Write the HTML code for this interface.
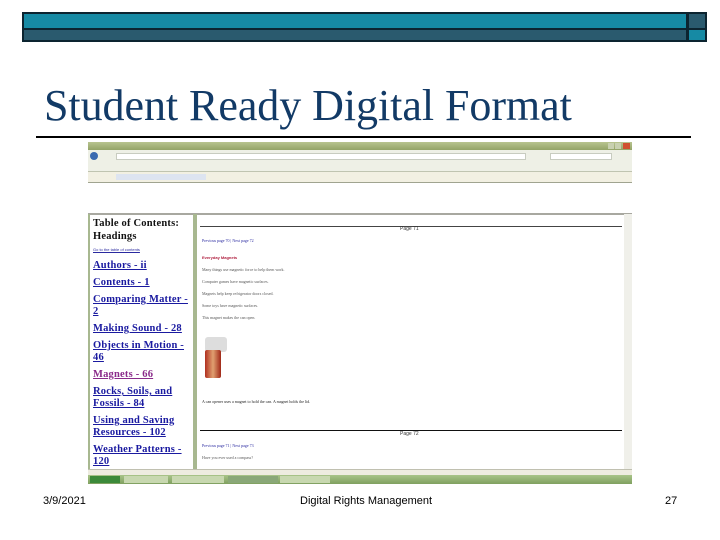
<!DOCTYPE html>
<html><head><style>
*{margin:0;padding:0;box-sizing:border-box}
body{width:720px;height:540px;background:#fff;position:relative;overflow:hidden;font-family:"Liberation Sans",sans-serif}
.a{position:absolute}
.toc a{display:block;color:#1a1aa0;font-family:"Liberation Serif",serif;font-weight:bold;font-size:10.5px;line-height:12px;text-decoration:underline;margin-bottom:5px;letter-spacing:0.2px}
.t{font-size:4px;color:#555;font-family:"Liberation Serif",serif;position:absolute;left:202px}
</style></head><body>
<div class="a" style="left:22px;top:12px;width:685px;height:30px;background:#0c2430"></div>
<div class="a" style="left:24px;top:14px;width:662px;height:14px;background:#168aa4"></div>
<div class="a" style="left:24px;top:30px;width:662px;height:10px;background:#2a5a6e"></div>
<div class="a" style="left:689px;top:14px;width:16px;height:14px;background:#2a5a6e"></div>
<div class="a" style="left:689px;top:30px;width:16px;height:10px;background:#168aa4"></div>
<div class="a" style="left:44px;top:80px;font-family:'Liberation Serif',serif;font-size:44px;color:#123a66;white-space:nowrap;letter-spacing:-0.05px">Student Ready Digital Format</div>
<div class="a" style="left:36px;top:136px;width:655px;height:2px;background:#000"></div>

<div class="a" style="left:88px;top:142px;width:544px;height:342px;background:#fff;overflow:hidden">
 <div class="a" style="left:0;top:0;width:544px;height:8px;background:linear-gradient(#b8c490,#94a468)"></div>
 <div class="a" style="left:520px;top:1px;width:6px;height:6px;background:#c8d0b0"></div>
 <div class="a" style="left:527px;top:1px;width:6px;height:6px;background:#c8d0b0"></div>
 <div class="a" style="left:535px;top:1px;width:7px;height:6px;background:#d05030"></div>
 <div class="a" style="left:0;top:8px;width:544px;height:21px;background:#eef0e6"></div>
 <div class="a" style="left:2px;top:10px;width:8px;height:8px;border-radius:50%;background:#3a6ab0"></div>
 <div class="a" style="left:28px;top:11px;width:410px;height:7px;background:#fff;border:1px solid #c8ccc0"></div>
 <div class="a" style="left:462px;top:11px;width:62px;height:7px;background:#fff;border:1px solid #c8ccc0"></div>
 <div class="a" style="left:0;top:29px;width:544px;height:12px;background:#f2f0e2;border-top:1px solid #c0c4b0;border-bottom:1px solid #a0a490"></div>
 <div class="a" style="left:28px;top:32px;width:90px;height:6px;background:#dde4f0"></div>
 <div class="a" style="left:0;top:71px;width:544px;height:2px;background:#a8a8a0"></div>
 <div class="a" style="left:105px;top:72px;width:4px;height:268px;background:#a8b890"></div>
 <div class="a" style="left:0;top:72px;width:2px;height:268px;background:#a8b890"></div>
 <div class="a" style="left:536px;top:72px;width:8px;height:262px;background:#f0f0ea"></div>
 <div class="toc a" style="left:5px;top:75px;width:98px">
  <div style="font-family:'Liberation Serif',serif;font-weight:bold;font-size:10.5px;line-height:13px;color:#111;margin-bottom:4px;letter-spacing:0.2px">Table of Contents: Headings</div>
  <div style="font-size:4px;color:#2a2aa0;text-decoration:underline;margin-bottom:8px">Go to the table of contents</div>
  <a>Authors - ii</a><a>Contents - 1</a><a>Comparing Matter - 2</a><a>Making Sound - 28</a><a>Objects in Motion - 46</a><a style="color:#8a2a8a">Magnets - 66</a><a>Rocks, Soils, and Fossils - 84</a><a>Using and Saving Resources - 102</a><a>Weather Patterns - 120</a>
 </div>
 <div class="a" style="left:112px;top:84px;width:422px;height:1px;background:#444"></div>
 <div class="a" style="left:312px;top:84px;font-size:5px;color:#333">Page 71</div>
 <div class="t" style="top:96px;left:114px;color:#2a2aa0">Previous page 70 | Next page 72</div>
 <div class="t" style="top:113px;left:114px;color:#b02040;font-family:'Liberation Sans';font-weight:bold">Everyday Magnets</div>
 <div class="t" style="top:125px;left:114px">Many things use magnetic force to help them work.</div>
 <div class="t" style="top:137px;left:114px">Computer games have magnetic surfaces.</div>
 <div class="t" style="top:149px;left:114px">Magnets help keep refrigerator doors closed.</div>
 <div class="t" style="top:161px;left:114px">Some toys have magnetic surfaces.</div>
 <div class="t" style="top:173px;left:114px">This magnet makes the can open.</div>
 <div class="a" style="left:117px;top:195px;width:22px;height:15px;background:#ddd;border-radius:3px"></div>
 <div class="a" style="left:117px;top:208px;width:16px;height:28px;background:linear-gradient(90deg,#b03020,#e0a070,#a02818);border-radius:2px"></div>
 <div class="t" style="top:257px;left:114px;color:#222">A can opener uses a magnet to hold the can. A magnet holds the lid.</div>
 <div class="a" style="left:112px;top:288px;width:422px;height:1px;background:#111"></div>
 <div class="a" style="left:312px;top:289px;font-size:5px;color:#333">Page 72</div>
 <div class="t" style="top:301px;left:114px;color:#2a2aa0">Previous page 71 | Next page 73</div>
 <div class="t" style="top:313px;left:114px">Have you ever used a compass?</div>
 <div class="a" style="left:0;top:327px;width:544px;height:6px;background:#eeece0;border-top:1px solid #c0c0b0"></div>
 <div class="a" style="left:0;top:333px;width:544px;height:9px;background:linear-gradient(#a8c488,#80a060)"></div>
 <div class="a" style="left:2px;top:334px;width:30px;height:7px;background:#3c8a3a"></div>
 <div class="a" style="left:36px;top:334px;width:44px;height:7px;background:#c8d8b0"></div>
 <div class="a" style="left:84px;top:334px;width:52px;height:7px;background:#c8d8b0"></div>
 <div class="a" style="left:140px;top:334px;width:50px;height:7px;background:#8aa878"></div>
 <div class="a" style="left:192px;top:334px;width:50px;height:7px;background:#c8d8b0"></div>
</div>

<div class="a" style="left:43px;top:495px;font-size:11px;color:#000">3/9/2021</div>
<div class="a" style="left:300px;top:495px;font-size:11px;color:#000">Digital Rights Management</div>
<div class="a" style="left:665px;top:495px;font-size:11px;color:#000">27</div>
</body></html>
